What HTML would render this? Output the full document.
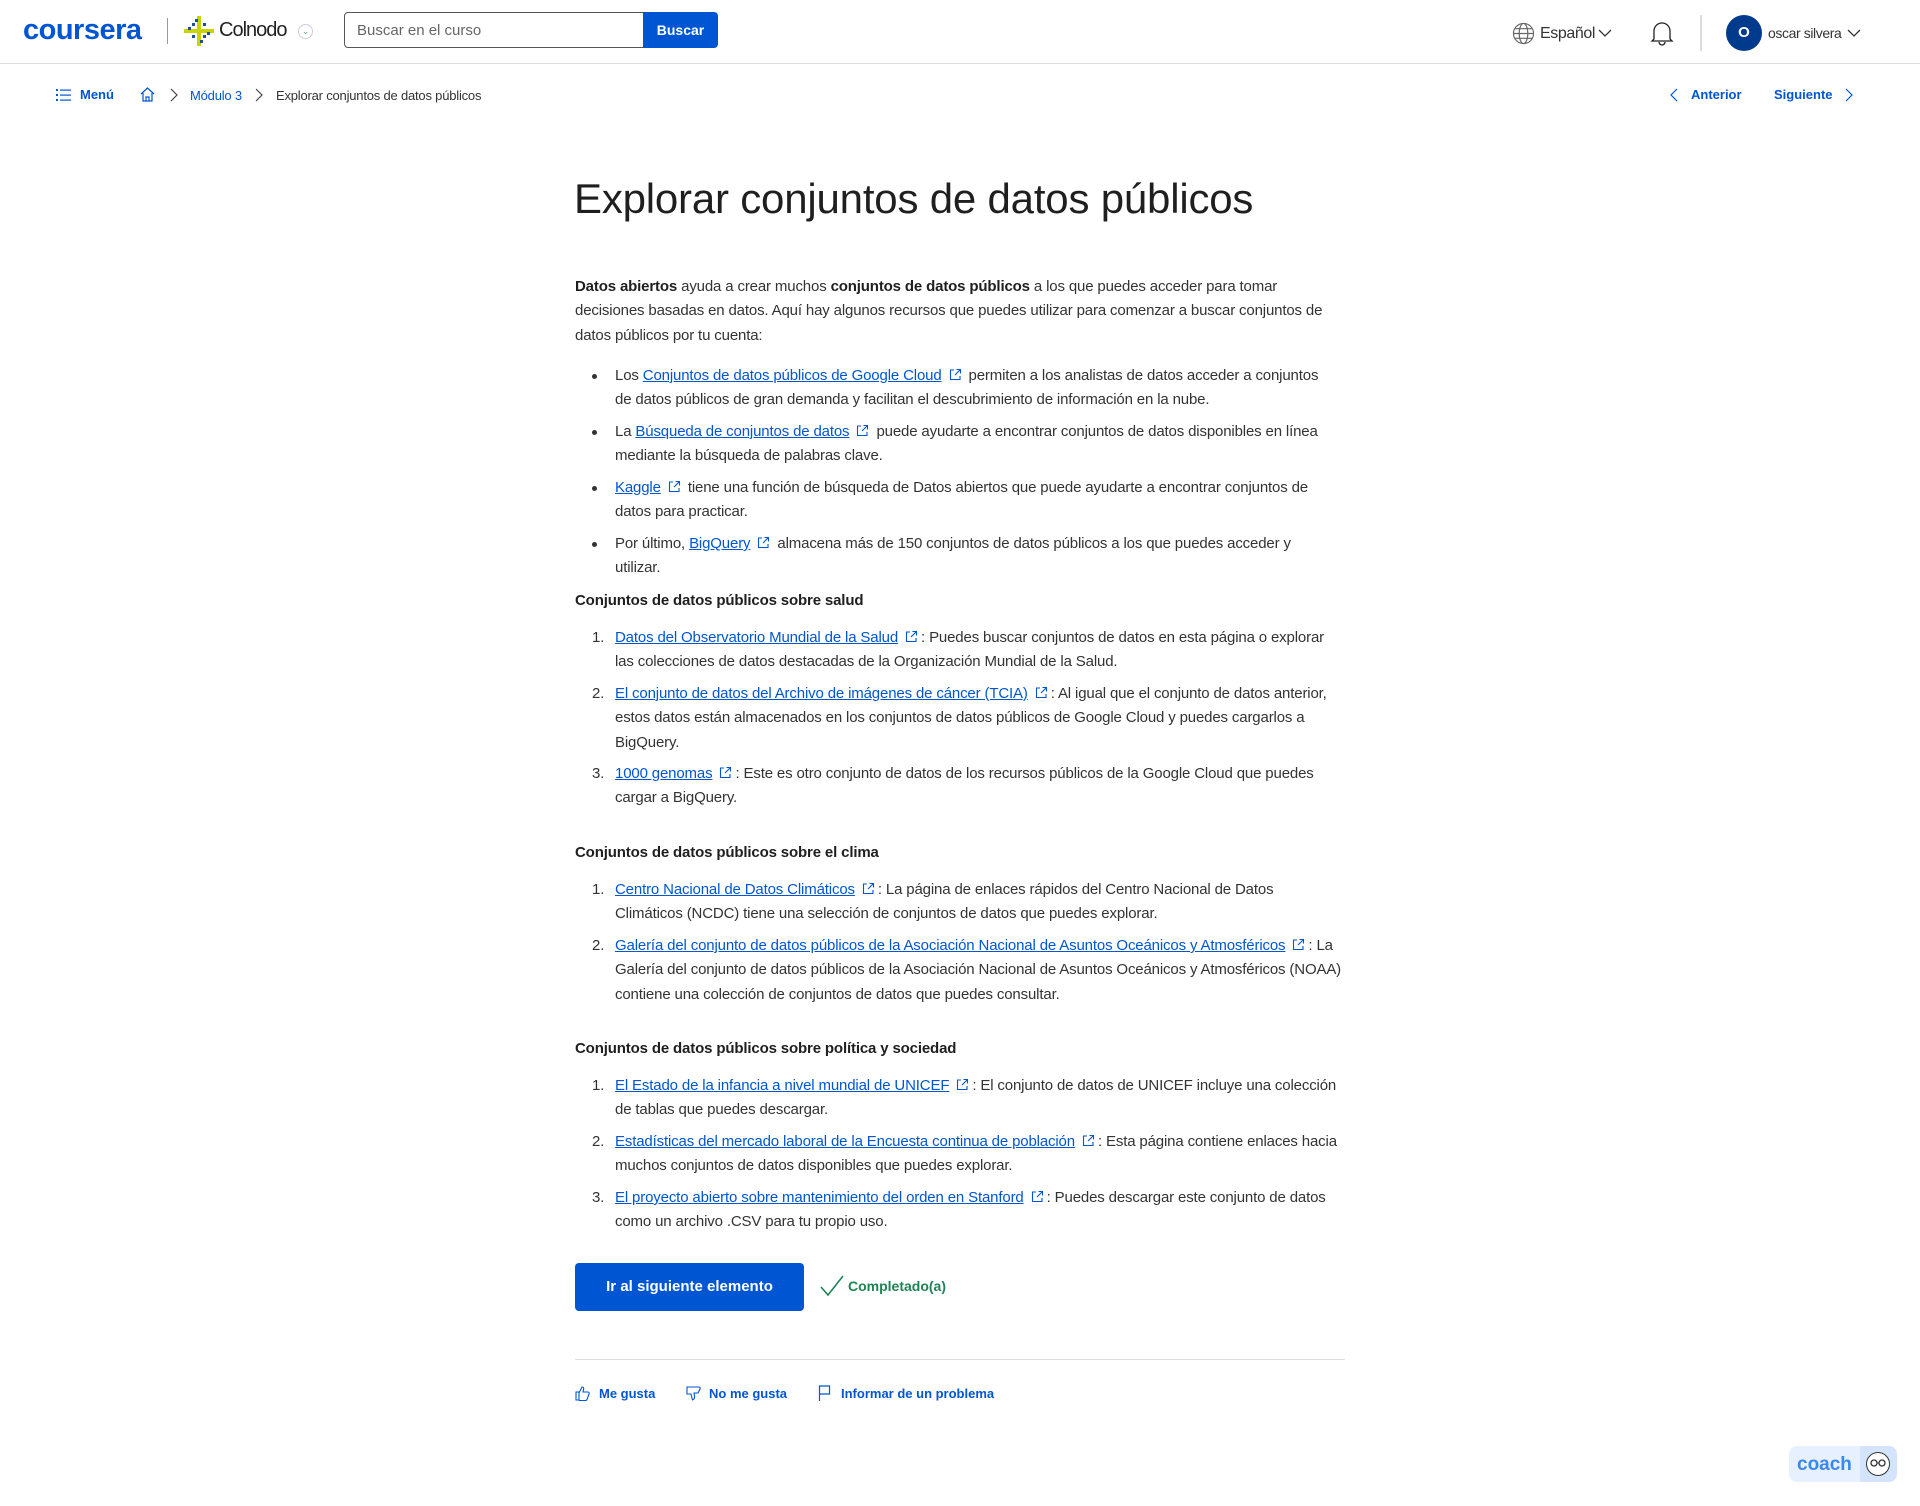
<!DOCTYPE html>
<html><head><meta charset="utf-8"><style>
*{margin:0;padding:0;box-sizing:border-box}
body{width:1920px;height:1506px;position:relative;background:#fff;font-family:"Liberation Sans",sans-serif;color:#1f1f1f;overflow:hidden}
.a{position:absolute;white-space:nowrap}
.b{position:absolute;left:575px;white-space:nowrap;font-size:15px;letter-spacing:-0.15px;line-height:24.4px;color:#333;margin-top:2px}
.li{left:615px}
.n{position:absolute;left:-23px;top:0}
.dot{position:absolute;left:-23px;top:10px;width:5px;height:5px;border-radius:50%;background:#333}
a{color:#0056d2;text-decoration:underline}
.x{display:inline-block;width:13px;height:13px;margin:0 3px 0 7px;vertical-align:-1px}
h3{position:absolute;left:575px;font-size:15px;font-weight:bold;color:#1f1f1f;white-space:nowrap;letter-spacing:-0.15px;margin-top:2px}
.blue{color:#0056d2}
</style></head><body>
<svg width="0" height="0" style="position:absolute"><defs><symbol id="ext" viewBox="0 0 13 13"><path d="M5 2H1.5v9.5H11V8M7.5 1.5H11.5V5.5M11.5 1.5L6 7" fill="none" stroke="#0056d2" stroke-width="1.1"/></symbol></defs></svg>

<!-- header -->
<div class="a" style="left:23px;top:14px;font-size:29px;font-weight:bold;color:#0056d2;letter-spacing:-0.5px">coursera</div>
<div class="a" style="left:167px;top:18px;width:1px;height:26px;background:#999"></div>
<svg class="a" style="left:183px;top:15px" width="32" height="32" viewBox="0 0 32 32"><rect x="14" y="1" width="4" height="30" fill="#c8d400"/><rect x="1" y="14" width="30" height="4" fill="#c8d400"/><g fill="#1b4fa0"><rect x="9" y="8" width="3" height="3"/><rect x="20" y="8" width="3" height="3"/><rect x="9" y="20" width="3" height="3"/><rect x="20" y="20" width="3" height="3"/><rect x="5" y="12" width="3" height="3"/><rect x="24" y="17" width="3" height="3"/><rect x="12" y="4" width="3" height="3"/><rect x="17" y="25" width="3" height="3"/></g></svg>
<div class="a" style="left:219px;top:19px;font-size:20px;color:#222;letter-spacing:-1px">Colnodo</div>
<div class="a" style="left:298px;top:24px;width:15px;height:15px;border:1px solid #ccd;border-radius:50%;font-size:9px;color:#6a8;text-align:center;line-height:13px">⌄</div>
<div class="a" style="left:344px;top:12px;width:300px;height:36px;border:1px solid #555;border-radius:4px 0 0 4px;font-size:15px;color:#666;padding:9px 12px">Buscar en el curso</div>
<div class="a" style="left:643px;top:12px;width:75px;height:36px;background:#0056d2;border-radius:0 4px 4px 0;color:#fff;font-size:14px;font-weight:bold;text-align:center;line-height:36px">Buscar</div>
<svg class="a" style="left:1512px;top:22px" width="23" height="23" viewBox="0 0 24 24" fill="none" stroke="#666" stroke-width="1.2"><circle cx="12" cy="12" r="10.5"/><ellipse cx="12" cy="12" rx="4.5" ry="10.5"/><path d="M1.5 12h21M3 7h18M3 17h18"/></svg>
<div class="a" style="left:1540px;top:25px;font-size:16px;color:#333;letter-spacing:-0.4px">Español</div>
<svg class="a" style="left:1598px;top:29px" width="14" height="9" viewBox="0 0 14 9"><path d="M1 1l6 6 6-6" fill="none" stroke="#333" stroke-width="1.3"/></svg>
<svg class="a" style="left:1650px;top:20px" width="24" height="26" viewBox="0 0 24 26" fill="none" stroke="#222" stroke-width="1.3"><path d="M4 19V11a8 8 0 0 1 16 0v8l2 2H2z"/><path d="M9 22a3 3 0 0 0 6 0"/></svg>
<div class="a" style="left:1700px;top:15px;width:2px;height:36px;background:#ddd"></div>
<div class="a" style="left:1726px;top:15px;width:36px;height:36px;border-radius:50%;background:#003a8c;color:#fff;font-weight:bold;font-size:15px;text-align:center;line-height:36px">O</div>
<div class="a" style="left:1768px;top:25px;font-size:14px;color:#333;letter-spacing:-0.4px">oscar silvera</div>
<svg class="a" style="left:1847px;top:29px" width="14" height="9" viewBox="0 0 14 9"><path d="M1 1l6 6 6-6" fill="none" stroke="#333" stroke-width="1.3"/></svg>
<div class="a" style="left:0;top:63px;width:1920px;height:1px;background:#ddd"></div>

<!-- breadcrumb -->
<svg class="a" style="left:56px;top:89px" width="15" height="12" viewBox="0 0 15 12" fill="#0056d2"><rect x="0" y="0" width="2" height="2"/><rect x="0" y="5" width="2" height="2"/><rect x="0" y="10" width="2" height="2"/><rect x="4" y="0.5" width="11" height="1.2"/><rect x="4" y="5.5" width="11" height="1.2"/><rect x="4" y="10.5" width="11" height="1.2"/></svg>
<div class="a blue" style="left:80px;top:87px;font-size:13px;font-weight:bold">Menú</div>
<svg class="a" style="left:140px;top:87px" width="15" height="15" viewBox="0 0 15 15" fill="none" stroke="#0056d2" stroke-width="1.2"><path d="M1 7L7.5 1 14 7M3 6v8h9V6M6 14v-4h3v4"/></svg>
<svg class="a" style="left:170px;top:88px" width="8" height="14" viewBox="0 0 8 14"><path d="M1 1l6 6-6 6" fill="none" stroke="#444" stroke-width="1.2"/></svg>
<div class="a blue" style="left:190px;top:88px;font-size:13px;letter-spacing:-0.2px">Módulo 3</div>
<svg class="a" style="left:255px;top:88px" width="8" height="14" viewBox="0 0 8 14"><path d="M1 1l6 6-6 6" fill="none" stroke="#444" stroke-width="1.2"/></svg>
<div class="a" style="left:276px;top:88px;font-size:13px;color:#333;letter-spacing:-0.2px">Explorar conjuntos de datos públicos</div>
<svg class="a" style="left:1670px;top:88px" width="8" height="14" viewBox="0 0 8 14"><path d="M7 1L1 7l6 6" fill="none" stroke="#0056d2" stroke-width="1.2"/></svg>
<div class="a blue" style="left:1691px;top:87px;font-size:13px;font-weight:bold">Anterior</div>
<div class="a blue" style="left:1774px;top:87px;font-size:13px;font-weight:bold">Siguiente</div>
<svg class="a" style="left:1845px;top:88px" width="8" height="14" viewBox="0 0 8 14"><path d="M1 1l6 6-6 6" fill="none" stroke="#0056d2" stroke-width="1.2"/></svg>

<!-- title -->
<div class="a" style="left:574px;top:175px;font-size:42px;color:#1f1f1f;letter-spacing:-0.2px">Explorar conjuntos de datos públicos</div>

<div class="b" style="top:273px"><b style="color:#1f1f1f">Datos abiertos</b> ayuda a crear muchos <b style="color:#1f1f1f">conjuntos de datos públicos</b> a los que puedes acceder para tomar<br>decisiones basadas en datos. Aquí hay algunos recursos que puedes utilizar para comenzar a buscar conjuntos de<br>datos públicos por tu cuenta:</div>

<div class="b li" style="top:362px"><span class="dot"></span>Los <a>Conjuntos de datos públicos de Google Cloud</a><svg class="x"><use href="#ext"/></svg> permiten a los analistas de datos acceder a conjuntos<br>de datos públicos de gran demanda y facilitan el descubrimiento de información en la nube.</div>
<div class="b li" style="top:418px"><span class="dot"></span>La <a>Búsqueda de conjuntos de datos</a><svg class="x"><use href="#ext"/></svg> puede ayudarte a encontrar conjuntos de datos disponibles en línea<br>mediante la búsqueda de palabras clave.</div>
<div class="b li" style="top:474px"><span class="dot"></span><a>Kaggle</a><svg class="x"><use href="#ext"/></svg> tiene una función de búsqueda de Datos abiertos que puede ayudarte a encontrar conjuntos de<br>datos para practicar.</div>
<div class="b li" style="top:530px"><span class="dot"></span>Por último, <a>BigQuery</a><svg class="x"><use href="#ext"/></svg> almacena más de 150 conjuntos de datos públicos a los que puedes acceder y<br>utilizar.</div>

<h3 style="top:590px">Conjuntos de datos públicos sobre salud</h3>
<div class="b li" style="top:624px"><span class="n">1.</span><a>Datos del Observatorio Mundial de la Salud</a><svg class="x"><use href="#ext"/></svg>: Puedes buscar conjuntos de datos en esta página o explorar<br>las colecciones de datos destacadas de la Organización Mundial de la Salud.</div>
<div class="b li" style="top:680px"><span class="n">2.</span><a>El conjunto de datos del Archivo de imágenes de cáncer (TCIA)</a><svg class="x"><use href="#ext"/></svg>: Al igual que el conjunto de datos anterior,<br>estos datos están almacenados en los conjuntos de datos públicos de Google Cloud y puedes cargarlos a<br>BigQuery.</div>
<div class="b li" style="top:760px"><span class="n">3.</span><a>1000 genomas</a><svg class="x"><use href="#ext"/></svg>: Este es otro conjunto de datos de los recursos públicos de la Google Cloud que puedes<br>cargar a BigQuery.</div>

<h3 style="top:842px">Conjuntos de datos públicos sobre el clima</h3>
<div class="b li" style="top:876px"><span class="n">1.</span><a>Centro Nacional de Datos Climáticos</a><svg class="x"><use href="#ext"/></svg>: La página de enlaces rápidos del Centro Nacional de Datos<br>Climáticos (NCDC) tiene una selección de conjuntos de datos que puedes explorar.</div>
<div class="b li" style="top:932px"><span class="n">2.</span><a>Galería del conjunto de datos públicos de la Asociación Nacional de Asuntos Oceánicos y Atmosféricos</a><svg class="x"><use href="#ext"/></svg>: La<br>Galería del conjunto de datos públicos de la Asociación Nacional de Asuntos Oceánicos y Atmosféricos (NOAA)<br>contiene una colección de conjuntos de datos que puedes consultar.</div>

<h3 style="top:1038px">Conjuntos de datos públicos sobre política y sociedad</h3>
<div class="b li" style="top:1072px"><span class="n">1.</span><a>El Estado de la infancia a nivel mundial de UNICEF</a><svg class="x"><use href="#ext"/></svg>: El conjunto de datos de UNICEF incluye una colección<br>de tablas que puedes descargar.</div>
<div class="b li" style="top:1128px"><span class="n">2.</span><a>Estadísticas del mercado laboral de la Encuesta continua de población</a><svg class="x"><use href="#ext"/></svg>: Esta página contiene enlaces hacia<br>muchos conjuntos de datos disponibles que puedes explorar.</div>
<div class="b li" style="top:1184px"><span class="n">3.</span><a>El proyecto abierto sobre mantenimiento del orden en Stanford</a><svg class="x"><use href="#ext"/></svg>: Puedes descargar este conjunto de datos<br>como un archivo .CSV para tu propio uso.</div>

<div class="a" style="left:575px;top:1263px;width:229px;height:48px;background:#0056d2;border-radius:4px;color:#fff;font-size:15px;font-weight:bold;text-align:center;line-height:48px">Ir al siguiente elemento</div>
<svg class="a" style="left:820px;top:1275px" width="24" height="22" viewBox="0 0 24 22"><path d="M1 12l7 8L23 1" fill="none" stroke="#1f8354" stroke-width="1.6"/></svg>
<div class="a" style="left:848px;top:1278px;font-size:14px;font-weight:bold;color:#1f8354">Completado(a)</div>

<div class="a" style="left:575px;top:1359px;width:770px;height:1px;background:#ddd"></div>
<svg class="a" style="left:575px;top:1385px" width="15" height="16" viewBox="0 0 15 16" fill="none" stroke="#0056d2" stroke-width="1.1"><path d="M1 7h3v8H1zM4 8l3-6c1.5 0 2 1 1.5 3L8 7h5c1 0 1.5 1 1 2l-2 5.5c-.3.7-1 1-1.5 1H4"/></svg>
<div class="a blue" style="left:599px;top:1386px;font-size:13px;font-weight:bold">Me gusta</div>
<svg class="a" style="left:686px;top:1386px" width="15" height="16" viewBox="0 0 15 16" fill="none" stroke="#0056d2" stroke-width="1.1"><path d="M1 1h12c1 0 1.5 1 1 2l-2 4H8l.5 3c.5 2-1 4-2 4L5 8H1z"/></svg>
<div class="a blue" style="left:709px;top:1386px;font-size:13px;font-weight:bold">No me gusta</div>
<svg class="a" style="left:818px;top:1385px" width="13" height="16" viewBox="0 0 13 16" fill="none" stroke="#0056d2" stroke-width="1.2"><path d="M1.5 16V1h10v8h-10"/></svg>
<div class="a blue" style="left:841px;top:1386px;font-size:13px;font-weight:bold">Informar de un problema</div>

<div class="a" style="left:1789px;top:1446px;width:108px;height:36px;background:#e6f0ff;border-radius:8px;overflow:hidden">
<div class="a" style="left:8px;top:8px;font-size:19px;font-weight:bold;color:#3b87f0">coach</div>
<div class="a" style="left:71px;top:0;width:37px;height:36px;background:#d4e4fd"></div>
<svg class="a" style="left:76px;top:5px" width="26" height="26" viewBox="0 0 26 26"><circle cx="13" cy="13" r="11.5" fill="#fff" stroke="#333" stroke-width="1"/><circle cx="9" cy="12" r="3" fill="none" stroke="#333" stroke-width="1.3"/><circle cx="17" cy="12" r="3" fill="none" stroke="#333" stroke-width="1.3"/><path d="M12 12h2" stroke="#333"/></svg>
</div>
</body></html>
